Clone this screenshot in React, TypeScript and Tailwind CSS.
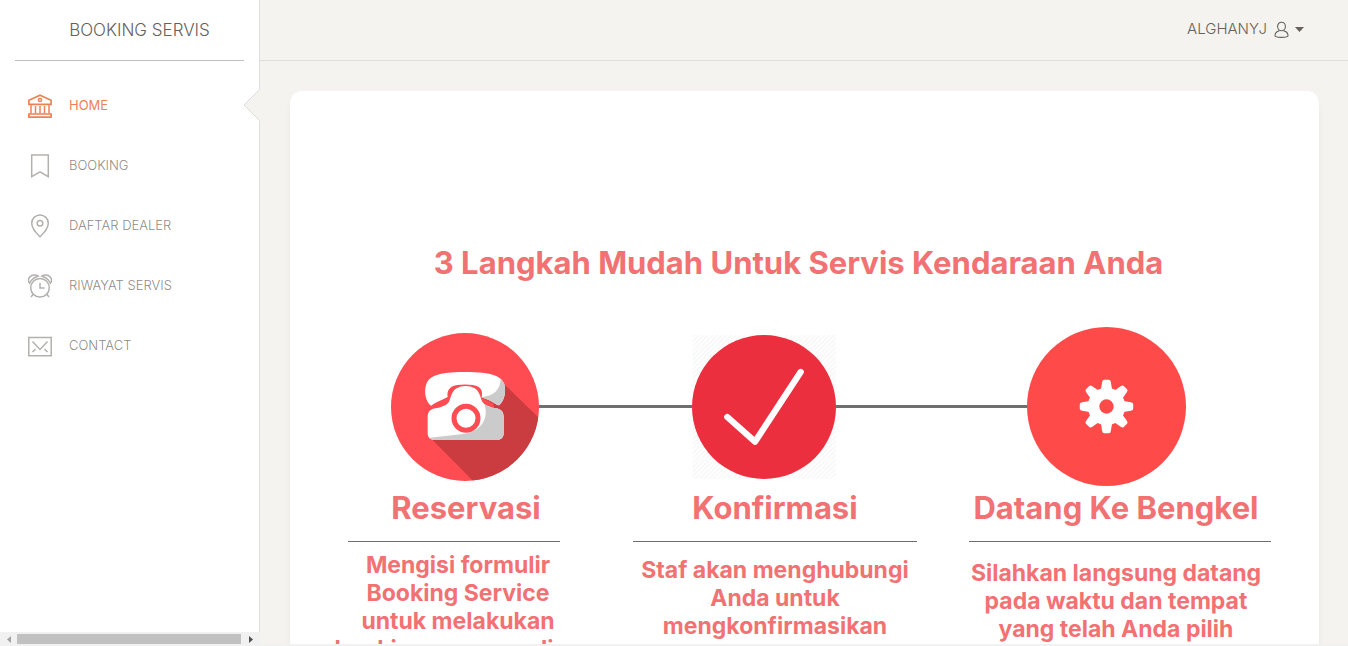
import type { ReactNode } from "react";

function Glyph({ children }: { children: ReactNode }) {
  return (
    <svg
      viewBox="0 0 24 24"
      className="size-6 shrink-0"
      fill="none"
      stroke="currentColor"
      strokeWidth="1.5"
      aria-hidden="true"
    >
      {children}
    </svg>
  );
}

const menu = [
  {
    label: "HOME",
    active: true,
    icon: (
      <Glyph>
        <path d="M.9 10.300V6.200L12 1.200l11.100 5v4.100z" strokeWidth="1.700" />
        <circle cx="12" cy="6" r="1.600" />
        <path d="M3 10.500v9M7.500 12v7.500M12 12v7.500M16.500 12v7.500M21 10.500v9" />
        <path d="M.9 20h22.200v3.100H.9z" strokeWidth="1.700" />
      </Glyph>
    ),
  },
  {
    label: "BOOKING",
    icon: (
      <Glyph>
        <path d="M3.700 1h16.600v21.600L12 17.800l-8.300 4.800z" />
      </Glyph>
    ),
  },
  {
    label: "DAFTAR DEALER",
    icon: (
      <Glyph>
        <path d="M20.300 9.200c0 5.800-8.300 13.500-8.300 13.500S3.700 15 3.700 9.200a8.300 8.200 0 0 1 16.600 0z" />
        <circle cx="12" cy="9.200" r="2.800" />
      </Glyph>
    ),
  },
  {
    label: "RIWAYAT SERVIS",
    icon: (
      <Glyph>
        <circle cx="12" cy="13.800" r="9.300" />
        <path d="M12 9v5h4.600M5.200 20.300 3 23M18.800 20.300 21 23" />
        <path d="M10 2.200C7.600.3 4 .5 2 2.700S.2 7.500 1.600 9.200C3.300 5.500 6 3.300 10 2.200zM14 2.200c2.400-1.900 6-1.700 8 .5s1.800 4.800.4 6.500C20.700 5.500 18 3.300 14 2.200z" />
      </Glyph>
    ),
  },
  {
    label: "CONTACT",
    icon: (
      <Glyph>
        <path d="M.8 3.500h22.400v18.300H.8z" />
        <path d="m4.500 7.500 7.500 8 7.500-8M4.500 18l3-3M19.500 18l-3-3" />
      </Glyph>
    ),
  },
];

function PhoneBadge() {
  return (
    <svg viewBox="34 36 444 444" className="size-[148px] shrink-0" aria-hidden="true">
      <defs>
        <clipPath id="disc">
          <circle cx="256" cy="258" r="222" />
        </clipPath>
        <clipPath id="phone-parts">
          <path d="M152 253c-18-18-18-46-12-64 8-22 32-36 116-36s110 14 118 36c4 18 4 44-14 62-4 4-8 0-12-2-12-8-26-14-42-20 2-14 2-24-10-32-16-9-64-9-80 0-12 8-14 18-12 31-16 8-32 14-44 22-4 3-6 5-8 3z" />
          <path d="M144 290c0-16 6-25 22-28 14-2 34-8 42-20 8-14 6-46 50-47 44 1 42 33 50 47 8 12 28 18 42 20 16 3 22 12 22 28v46c0 14-8 21-22 21H166c-14 0-22-7-22-21z" />
        </clipPath>
      </defs>
      <circle cx="256" cy="258" r="222" fill="#ff4c52" />
      <path clipPath="url(#disc)" d="M366 182 520 332v180H312L152 350z" fill="#cb3c41" />
      <path
        d="M202 232c-2-22-2-30 12-38 18-8 66-8 82 0 14 8 14 18 12 36l34 18c4 24-10 40-10 40H180l-10-36z"
        fill="#ff4c52"
      />
      <g clipPath="url(#phone-parts)">
        <path d="M120 140h270v230H120z" fill="#fff" />
        <path d="M363 170c0 36-20 54-56 58l10 32c8 46-24 72-60 78l-120 14v30h260V170z" fill="#cbcbcb" />
      </g>
      <circle cx="259" cy="292" r="36" fill="#fff" stroke="#ff4c52" strokeWidth="15" />
    </svg>
  );
}

function CheckBadge() {
  return (
    <svg viewBox="36 27 432 432" className="size-36 shrink-0" aria-hidden="true">
      <defs>
        <pattern id="hatch" width="14" height="14" patternUnits="userSpaceOnUse">
          <path d="M-7 7 7-7M-7 21 21-7M7 21 21 7" stroke="#f6f6f6" strokeWidth="4" />
        </pattern>
      </defs>
      <path d="M38 27h430v432H38z" fill="url(#hatch)" />
      <circle cx="252" cy="243" r="216" fill="#ec2f3e" />
      <path
        d="m142 273 83 74L362 138"
        fill="none"
        stroke="#fff"
        strokeWidth="19"
        strokeLinecap="round"
        strokeLinejoin="round"
      />
    </svg>
  );
}

const teeth = [0, 45, 90, 135, 180, 225, 270, 315];

function GearBadge() {
  return (
    <svg viewBox="20 19 476 476" className="size-[159px] shrink-0" aria-hidden="true">
      <circle cx="258" cy="257" r="238" fill="#ff4a4a" />
      <g fill="#fff">
        <circle cx="258" cy="257" r="56" />
        {teeth.map((angle) => (
          <path
            key={angle}
            transform={`rotate(${angle} 258 257)`}
            d="M234 211q7-3 8-9l3-18q1-7 6-7h14q5 0 6 7l3 18q1 6 8 9z"
          />
        ))}
      </g>
      <circle cx="258" cy="257" r="21.500" fill="#ff4a4a" />
    </svg>
  );
}

function Sidebar() {
  return (
    <aside className="flex w-[260px] shrink-0 flex-col border-r border-[#dddddd] bg-white">
      <div className="mx-[15px] flex h-[61px] items-center justify-center border-b border-[#bfbfbf] pt-[2px] pl-5">
        <a href="#home" className="text-[17px] font-light text-[#66615b]">
          BOOKING SERVIS
        </a>
      </div>
      <nav className="flex flex-1 flex-col pt-[15px]">
        {menu.map((item) => (
          <a
            key={item.label}
            href="#menu"
            className={
              item.active
                ? "relative flex h-[60px] items-center gap-[17px] pl-7 text-[13px] text-[#ef8157]"
                : "relative flex h-[60px] items-center gap-[17px] pl-7 text-[13px] font-light text-[#66615b]/75"
            }
          >
            <span className={item.active ? "" : "text-[#b3b1ae]"}>{item.icon}</span>
            {item.label}
            {item.active && (
              <svg
                viewBox="0 0 17 32"
                className="absolute -right-px top-[13px] h-8 w-[17px]"
                aria-hidden="true"
              >
                <path d="M17 0 1 16l16 16z" fill="#f4f3ef" />
                <path d="M16 1 1 16l15 15" fill="none" stroke="#dddddd" />
              </svg>
            )}
          </a>
        ))}
      </nav>
      <div className="-mr-px flex h-3 items-end bg-[#f1f1f1]">
        <button aria-label="Scroll left" className="flex h-[10px] w-[17px] items-center justify-center">
          <svg viewBox="0 0 4 7" className="h-[7px] w-1" aria-hidden="true">
            <path d="M4 0v7L0 3.500z" fill="#a3a3a3" />
          </svg>
        </button>
        <div className="h-[10px] flex-1 bg-[#c1c1c1]" />
        <button aria-label="Scroll right" className="flex h-[10px] w-[19px] items-center justify-center">
          <svg viewBox="0 0 4 7" className="h-[7px] w-1" aria-hidden="true">
            <path d="M0 0v7l4-3.500z" fill="#505050" />
          </svg>
        </button>
      </div>
    </aside>
  );
}

function Topbar() {
  return (
    <header className="flex h-[61px] shrink-0 items-center justify-end border-b border-[#dddddd] pb-[2px] pr-11">
      <button className="flex items-center gap-[6px] text-[15px] font-light text-[#66615b]">
        ALGHANYJ
        <svg
          viewBox="0 0 16 18"
          className="mt-[2px] h-[18px] w-4"
          fill="none"
          stroke="currentColor"
          strokeWidth="1.100"
          aria-hidden="true"
        >
          <ellipse cx="8.500" cy="5.500" rx="3.900" ry="4.300" />
          <path d="M6.200 9.900C3.500 10.500 2 12 2 14.800c0 1 2 1.600 6.500 1.600s6.500-.6 6.500-1.600c0-2.800-1.500-4.300-4.300-4.900" />
        </svg>
        <svg viewBox="0 0 9 5" className="h-[5px] w-[9px]" aria-hidden="true">
          <path d="M0 0h9L4.500 5z" fill="currentColor" />
        </svg>
      </button>
    </header>
  );
}

function StepText({ lines }: { lines: string[] }) {
  return (
    <p className="flex flex-col items-center whitespace-nowrap text-[23px] leading-7">
      {lines.map((line) => (
        <span key={line}>{line}</span>
      ))}
    </p>
  );
}

export default function App() {
  return (
    <div className="flex h-screen flex-col bg-[#f1f1f1] font-['Inter',sans-serif]">
      <div className="flex min-h-0 flex-1 overflow-hidden">
        <Sidebar />
        <div className="flex min-w-0 flex-1 flex-col bg-[#f4f3ef]">
          <Topbar />
          <main className="min-h-0 flex-1 overflow-hidden pl-[30px] pr-[29px] pt-[30px]">
            <section className="min-h-full rounded-xl bg-white pt-[148px] font-bold text-[#f27172] shadow-[0_6px_10px_-4px_rgba(0,0,0,0.15)]">
              <h1 className="pr-3 text-center text-[31px] leading-12">
                3 Langkah Mudah Untuk Servis Kendaraan Anda
              </h1>
              <div className="mt-10 flex items-center pl-[101px] pr-[133px]">
                <PhoneBadge />
                <div className="h-[3px] flex-[153] bg-[#6f6f6f]" />
                <CheckBadge />
                <div className="h-[3px] flex-[190] bg-[#6f6f6f]" />
                <GearBadge />
              </div>
              <div className="flex items-start pl-[58px] pr-12">
                <article className="w-[212px]">
                  <h2 className="pl-6 text-center text-[31px] leading-11">Reservasi</h2>
                  <hr className="mt-[11px] mb-[9px] border-[#6f6f6f]" />
                  <div className="pl-2">
                    <StepText
                      lines={["Mengisi formulir", "Booking Service", "untuk melakukan", "booking secara online"]}
                    />
                  </div>
                </article>
                <div className="flex-[73]" />
                <article className="w-[284px]">
                  <h2 className="text-center text-[31px] leading-11">Konfirmasi</h2>
                  <hr className="mt-[11px] mb-[14px] border-[#6f6f6f]" />
                  <StepText lines={["Staf akan menghubungi", "Anda untuk", "mengkonfirmasikan"]} />
                </article>
                <div className="flex-[52]" />
                <article className="w-[302px]">
                  <h2 className="pr-2 text-center text-[31px] leading-11 whitespace-nowrap">Datang Ke Bengkel</h2>
                  <hr className="mt-[11px] mb-[17px] border-[#6f6f6f]" />
                  <div className="pr-2">
                    <StepText lines={["Silahkan langsung datang", "pada waktu dan tempat", "yang telah Anda pilih"]} />
                  </div>
                </article>
              </div>
            </section>
          </main>
        </div>
      </div>
      <div className="h-[2px] shrink-0 bg-[#f1f1f1]" />
    </div>
  );
}
